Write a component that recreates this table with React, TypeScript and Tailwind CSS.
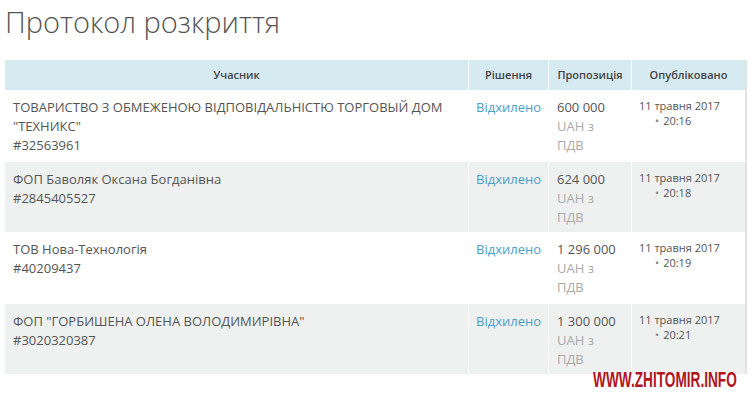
const rows = [
  {
    name: ["ТОВАРИСТВО З ОБМЕЖЕНОЮ ВІДПОВІДАЛЬНІСТЮ ТОРГОВЫЙ ДОМ", "\"ТЕХНИКС\""],
    code: "#32563961",
    amount: "600 000",
    time: "20:16",
  },
  { name: ["ФОП Баволяк Оксана Богданівна"], code: "#2845405527", amount: "624 000", time: "20:18" },
  { name: ["ТОВ Нова-Технологія"], code: "#40209437", amount: "1 296 000", time: "20:19" },
  { name: ["ФОП \"ГОРБИШЕНА ОЛЕНА ВОЛОДИМИРІВНА\""], code: "#3020320387", amount: "1 300 000", time: "20:21" },
];

export default function App() {
  return (
    <div className="relative w-[750px] h-[396px] overflow-hidden bg-white font-['Open_Sans',sans-serif] text-[#555]">
      <h1 className="pl-[5px] pt-[2px] text-[29px] leading-[40px] font-light text-[#555]">Протокол розкриття</h1>

      <div className="mt-[18px] ml-[5px] w-[742px] border-r-2 border-[#e2e2e2]">
        {/* header */}
        <div className="flex gap-[1px] text-[11px] font-semibold text-[#444]">
          <div className="w-[463px] h-[30px] flex items-center justify-center bg-[#d6eaf1]">Учасник</div>
          <div className="w-[79px] h-[30px] flex items-center justify-center bg-[#d6eaf1]">Рішення</div>
          <div className="w-[82px] h-[30px] flex items-center justify-center bg-[#d6eaf1]">Пропозиція</div>
          <div className="flex-1 h-[30px] flex items-center justify-center bg-[#d6eaf1]">Опубліковано</div>
        </div>

        {rows.map((r, i) => {
          const bg = i % 2 === 1 ? "bg-[#eef1ef]" : "bg-white";
          const h = i % 2 === 1 ? "h-[70px]" : "h-[72px]";
          return (
            <div key={i} className={`flex gap-[1px] text-[13px] leading-[19px] ${h}`}>
              <div className={`w-[463px] pl-[8px] pt-[8px] ${bg}`}>
                {r.name.map((n) => (
                  <div key={n}>{n}</div>
                ))}
                <div>{r.code}</div>
              </div>
              <div className={`w-[79px] pl-[7px] pt-[8px] text-[#4b9ec8] ${bg}`}>Відхилено</div>
              <div className={`w-[82px] pl-[8px] pt-[8px] ${bg}`}>
                <div>{r.amount}</div>
                <div className="text-[#aaa]">UAH з</div>
                <div className="text-[#aaa]">ПДВ</div>
              </div>
              <div className={`flex-1 pl-[7px] pt-[8px] text-[11px] leading-[15px] ${bg}`}>
                <div>11 травня 2017</div>
                <div className="pl-[16px]">
                  <span className="text-[#888] mr-[4px]">•</span>
                  {r.time}
                </div>
              </div>
            </div>
          );
        })}
      </div>

      <div className="absolute right-[13px] bottom-[7px] origin-right scale-x-[0.62] font-['Liberation_Sans',sans-serif] font-bold text-[22px] leading-[18px] text-[#b3141c]">
        WWW.ZHITOMIR.INFO
      </div>
    </div>
  );
}
